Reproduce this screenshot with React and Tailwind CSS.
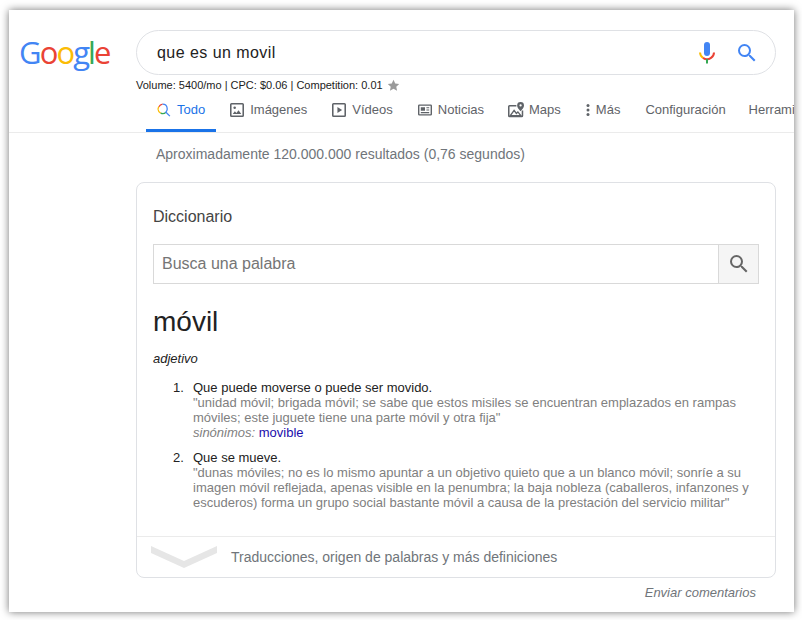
// Google results page with dictionary card

const ImageIcon = () => (
  <svg width="14" height="14" viewBox="3 3 18 18" fill="#5f6368" aria-hidden="true">
    <path d="M19 3H5a2 2 0 0 0-2 2v14a2 2 0 0 0 2 2h14a2 2 0 0 0 2-2V5a2 2 0 0 0-2-2Zm0 16H5V5h14v14Zm-5.04-6.710-2.750 3.540-1.960-2.360L6.500 17h11l-3.540-4.710Z" />
    <circle cx="9" cy="9" r="1.600" />
  </svg>
)

const VideoIcon = () => (
  <svg width="14" height="14" viewBox="3 3 18 18" fill="#5f6368" aria-hidden="true">
    <path d="M19 3H5a2 2 0 0 0-2 2v14a2 2 0 0 0 2 2h14a2 2 0 0 0 2-2V5a2 2 0 0 0-2-2Zm0 16H5V5h14v14ZM10 8v8l6-4-6-4Z" />
  </svg>
)

const NewsIcon = () => (
  <svg width="14" height="14" viewBox="2 3 20 18" fill="#5f6368" aria-hidden="true">
    <path d="M20 4H4a2 2 0 0 0-2 2v12a2 2 0 0 0 2 2h16a2 2 0 0 0 2-2V6a2 2 0 0 0-2-2Zm0 14H4V6h16v12ZM6 8h6v5H6V8Zm8 0h4v1.600h-4V8Zm0 3.200h4v1.600h-4v-1.600ZM6 15h12v1.600H6V15Z" />
  </svg>
)

const MapIcon = () => (
  <svg width="16" height="16" viewBox="2 1 21 21" fill="#5f6368" aria-hidden="true">
    <path d="M20 12v7H4V7h9V5H4a2 2 0 0 0-2 2v12a2 2 0 0 0 2 2h16a2 2 0 0 0 2-2v-7h-2Z" />
    <path d="m5 19 5-7 3 4 2-2 4 5H5Z" fill="none" stroke="#5f6368" strokeWidth="1.800" />
    <path d="M18.500 1A4.500 4.500 0 0 0 14 5.500C14 9 18.500 13 18.500 13S23 9 23 5.500A4.500 4.500 0 0 0 18.500 1Zm0 6a1.500 1.500 0 1 1 0-3 1.500 1.500 0 0 1 0 3Z" />
  </svg>
)

const DotsIcon = () => (
  <svg width="4" height="14" viewBox="0 0 4 14" fill="#5f6368" aria-hidden="true">
    <circle cx="2" cy="2.500" r="1.500" />
    <circle cx="2" cy="7" r="1.500" />
    <circle cx="2" cy="11.500" r="1.500" />
  </svg>
)

const ColorSearchIcon = () => (
  <svg width="14" height="14" viewBox="0 0 16 16" fill="none" strokeWidth="1.500" aria-hidden="true">
    <path d="M2.200 4.200A5.300 5.300 0 0 1 6.400 1.200" stroke="#ea4335" />
    <path d="M6.400 1.200a5.300 5.300 0 0 1 5.200 4.400" stroke="#4285f4" />
    <path d="M1.200 7.200a5.300 5.300 0 0 1 1-3" stroke="#fbbc05" />
    <path d="M1.200 7.200a5.300 5.300 0 0 0 3 4.300" stroke="#fbbc05" />
    <path d="M4.200 11.500a5.300 5.300 0 0 0 6-1" stroke="#34a853" />
    <path d="M11.600 5.600a5.300 5.300 0 0 1-1.400 4.900l4.500 4.500" stroke="#4285f4" />
  </svg>
)

const MicIcon = () => (
  <svg width="18" height="24" viewBox="0 0 18 24" fill="none" aria-hidden="true">
    <rect x="6" y="1" width="6" height="14" rx="3" fill="#4285f4" />
    <path d="M2 11.500a7 7 0 0 0 3 5.400" stroke="#fbbc05" strokeWidth="2" />
    <path d="M5 16.900a7 7 0 0 0 8 0c1.800-1.300 3-3.200 3-5.400" stroke="#ea4335" strokeWidth="2" />
    <rect x="8" y="18" width="2" height="4.500" fill="#34a853" />
  </svg>
)

const SearchGlass = ({ color, size }) => (
  <svg width={size} height={size} viewBox="0 0 24 24" fill={color} aria-hidden="true">
    <path d="M15.500 14h-.79l-.28-.27A6.470 6.470 0 0 0 16 9.500 6.500 6.500 0 1 0 9.500 16c1.610 0 3.090-.59 4.230-1.570l.27.28v.79l5 4.990L20.490 19l-4.990-5Zm-6 0C7.010 14 5 11.990 5 9.500S7.010 5 9.500 5 14 7.010 14 9.500 11.990 14 9.500 14Z" />
  </svg>
)

const Tab = ({ icon, label, className }) => (
  <div className={`flex items-center gap-[6px] text-[#5f6368] ${className ?? ''}`}>
    {icon}
    <span>{label}</span>
  </div>
)

export default function App() {
  return (
    <div className="w-[802px] h-[620px] bg-white pt-[10px] pl-[9px] overflow-hidden font-['Liberation_Sans',Arial,sans-serif]">
      <div className="w-[785px] h-[602px] bg-white overflow-hidden shadow-[0_0_8px_rgba(0,0,0,0.55)]">
        {/* Header */}
        <header className="h-[123px] border-b border-[#ebebeb]">
          <div className="flex pt-[20px] pl-[11px]">
            <div className="w-[116px] h-[45px] -ml-[1px] mr-[1px] flex items-center text-[31px] font-medium leading-none tracking-[-1.9px] font-['Open_Sans',sans-serif]">
              <span className="text-[#4285f4]">G</span>
              <span className="text-[#ea4335]">o</span>
              <span className="text-[#fbbc05]">o</span>
              <span className="text-[#4285f4]">g</span>
              <span className="text-[#34a853]">l</span>
              <span className="text-[#ea4335]">e</span>
            </div>
            <div className="w-[640px] shrink-0">
              <div className="h-[45px] rounded-[23px] border border-[#dfe1e5] flex items-center pl-[20px] pr-[16px]">
                <span className="flex-1 text-[16px] tracking-[0.45px] text-[#222]">que es un movil</span>
                <MicIcon />
                <div className="ml-[19px]">
                  <SearchGlass color="#4285f4" size={24} />
                </div>
              </div>
              <div className="flex items-center gap-[4px] h-[19px] pt-px text-[11px] text-[#222]">
                <span>Volume: 5400/mo | CPC: $0.06 | Competition: 0.01</span>
                <svg width="13" height="13" viewBox="0 0 24 24" fill="#9a9a9a" aria-hidden="true">
                  <path d="m12 1.500 3.200 7 7.300.8-5.400 5 1.500 7.500L12 18l-6.600 3.800 1.500-7.500-5.400-5 7.300-.8 3.200-7Z" />
                </svg>
              </div>
            </div>
          </div>
          <nav className="flex items-center gap-[24px] pl-[148px] h-[32px] text-[13px] whitespace-nowrap">
            <div className="relative flex items-center gap-[6px] text-[#1a73e8]">
              <ColorSearchIcon />
              <span>Todo</span>
              <div className="absolute -left-[11px] -right-[11px] top-[29px] h-[3px] bg-[#1a73e8]" />
            </div>
            <Tab icon={<ImageIcon />} label="Imágenes" className="ml-px" />
            <Tab icon={<VideoIcon />} label="Vídeos" className="ml-px" />
            <Tab icon={<NewsIcon />} label="Noticias" className="ml-px" />
            <div className="flex items-center gap-[5px] text-[#5f6368]">
              <MapIcon />
              <span>Maps</span>
            </div>
            <div className="flex items-center gap-[6px] ml-px text-[#5f6368]">
              <DotsIcon />
              <span>Más</span>
            </div>
            <span className="text-[#5f6368] ml-px">Configuración</span>
            <span className="text-[#5f6368] -ml-px">Herramientas</span>
          </nav>
        </header>

        {/* Results count */}
        <p className="pl-[147px] pt-[12px] text-[14px] leading-[18px] text-[#70757a]">
          Aproximadamente 120.000.000 resultados (0,76 segundos)
        </p>

        {/* Dictionary card */}
        <section className="ml-[127px] mt-[19px] w-[640px] h-[396px] rounded-[8px] border border-[#dfe1e5] flex flex-col">
          <div className="flex-1 px-[16px]">
            <h2 className="pt-[23px] text-[16px] leading-[22px] text-[#444]">Diccionario</h2>
            <div className="mt-[16px] h-[40px] flex border border-[#d9d9d9]">
              <span className="flex-1 pl-[8px] text-[16px] leading-[38px] text-[#757575]">Busca una palabra</span>
              <div className="w-[40px] bg-[#f5f5f5] border-l border-[#d9d9d9] flex items-center justify-center">
                <SearchGlass color="#666" size={24} />
              </div>
            </div>
            <h1 className="mt-[20px] text-[28px] leading-[36px] text-[#222]">móvil</h1>
            <p className="mt-[10px] text-[13px] leading-[18px] italic text-[#222]">adjetivo</p>
            <ol className="mt-[12px] text-[13px] leading-[15px] text-[#808080] whitespace-nowrap">
              <li className="flex">
                <span className="w-[40px] pl-[20px] text-[#222]">1.</span>
                <div>
                  <div className="text-[#222]">Que puede moverse o puede ser movido.</div>
                  <div>"unidad móvil; brigada móvil; se sabe que estos misiles se encuentran emplazados en rampas</div>
                  <div>móviles; este juguete tiene una parte móvil y otra fija"</div>
                  <div><i>sinónimos:</i> <span className="text-[#1a0dab]">movible</span></div>
                </div>
              </li>
              <li className="flex mt-[10px]">
                <span className="w-[40px] pl-[20px] text-[#222]">2.</span>
                <div>
                  <div className="text-[#222]">Que se mueve.</div>
                  <div>"dunas móviles; no es lo mismo apuntar a un objetivo quieto que a un blanco móvil; sonríe a su</div>
                  <div>imagen móvil reflejada, apenas visible en la penumbra; la baja nobleza (caballeros, infanzones y</div>
                  <div>escuderos) forma un grupo social bastante móvil a causa de la prestación del servicio militar"</div>
                </div>
              </li>
            </ol>
          </div>
          <div className="h-[41px] border-t border-[#ebebeb] flex items-center pl-[14px]">
            <svg width="66" height="22" viewBox="0 0 66 22" aria-hidden="true">
              <path d="M0 0 33 15 66 0v7L33 22 0 7Z" fill="#e6e6e6" />
            </svg>
            <span className="ml-[14px] text-[14px] text-[#70757a]">Traducciones, origen de palabras y más definiciones</span>
          </div>
        </section>

        <p className="mt-[7px] w-[747px] text-right text-[13px] leading-[16px] italic text-[#70757a]">Enviar comentarios</p>
      </div>
    </div>
  )
}
